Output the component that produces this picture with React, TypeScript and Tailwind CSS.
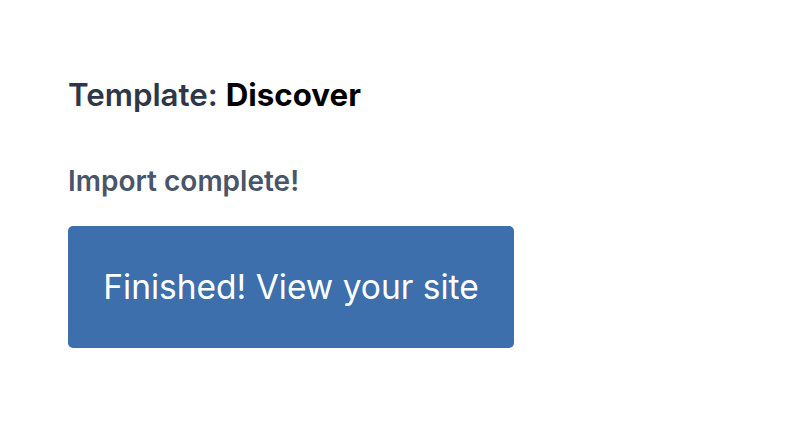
export default function App() {
  return (
    <div className="min-h-screen bg-white px-[68px] pt-[75px]" style={{ fontFamily: "Inter, 'Noto Sans', sans-serif" }}>
      <h1 className="text-[31.3px] leading-[40px] font-semibold text-[#2d3748]">
        Template: <span className="font-bold text-black">Discover</span>
      </h1>
      <p className="mt-[50px] text-[28px] leading-[32px] font-semibold text-[#4a5568]">Import complete!</p>
      <a className="mt-[29px] inline-flex h-[122px] w-[446px] items-center justify-center rounded-[5px] bg-[#3c6fab] text-[33.5px] text-white">
        Finished! View your site
      </a>
    </div>
  );
}
